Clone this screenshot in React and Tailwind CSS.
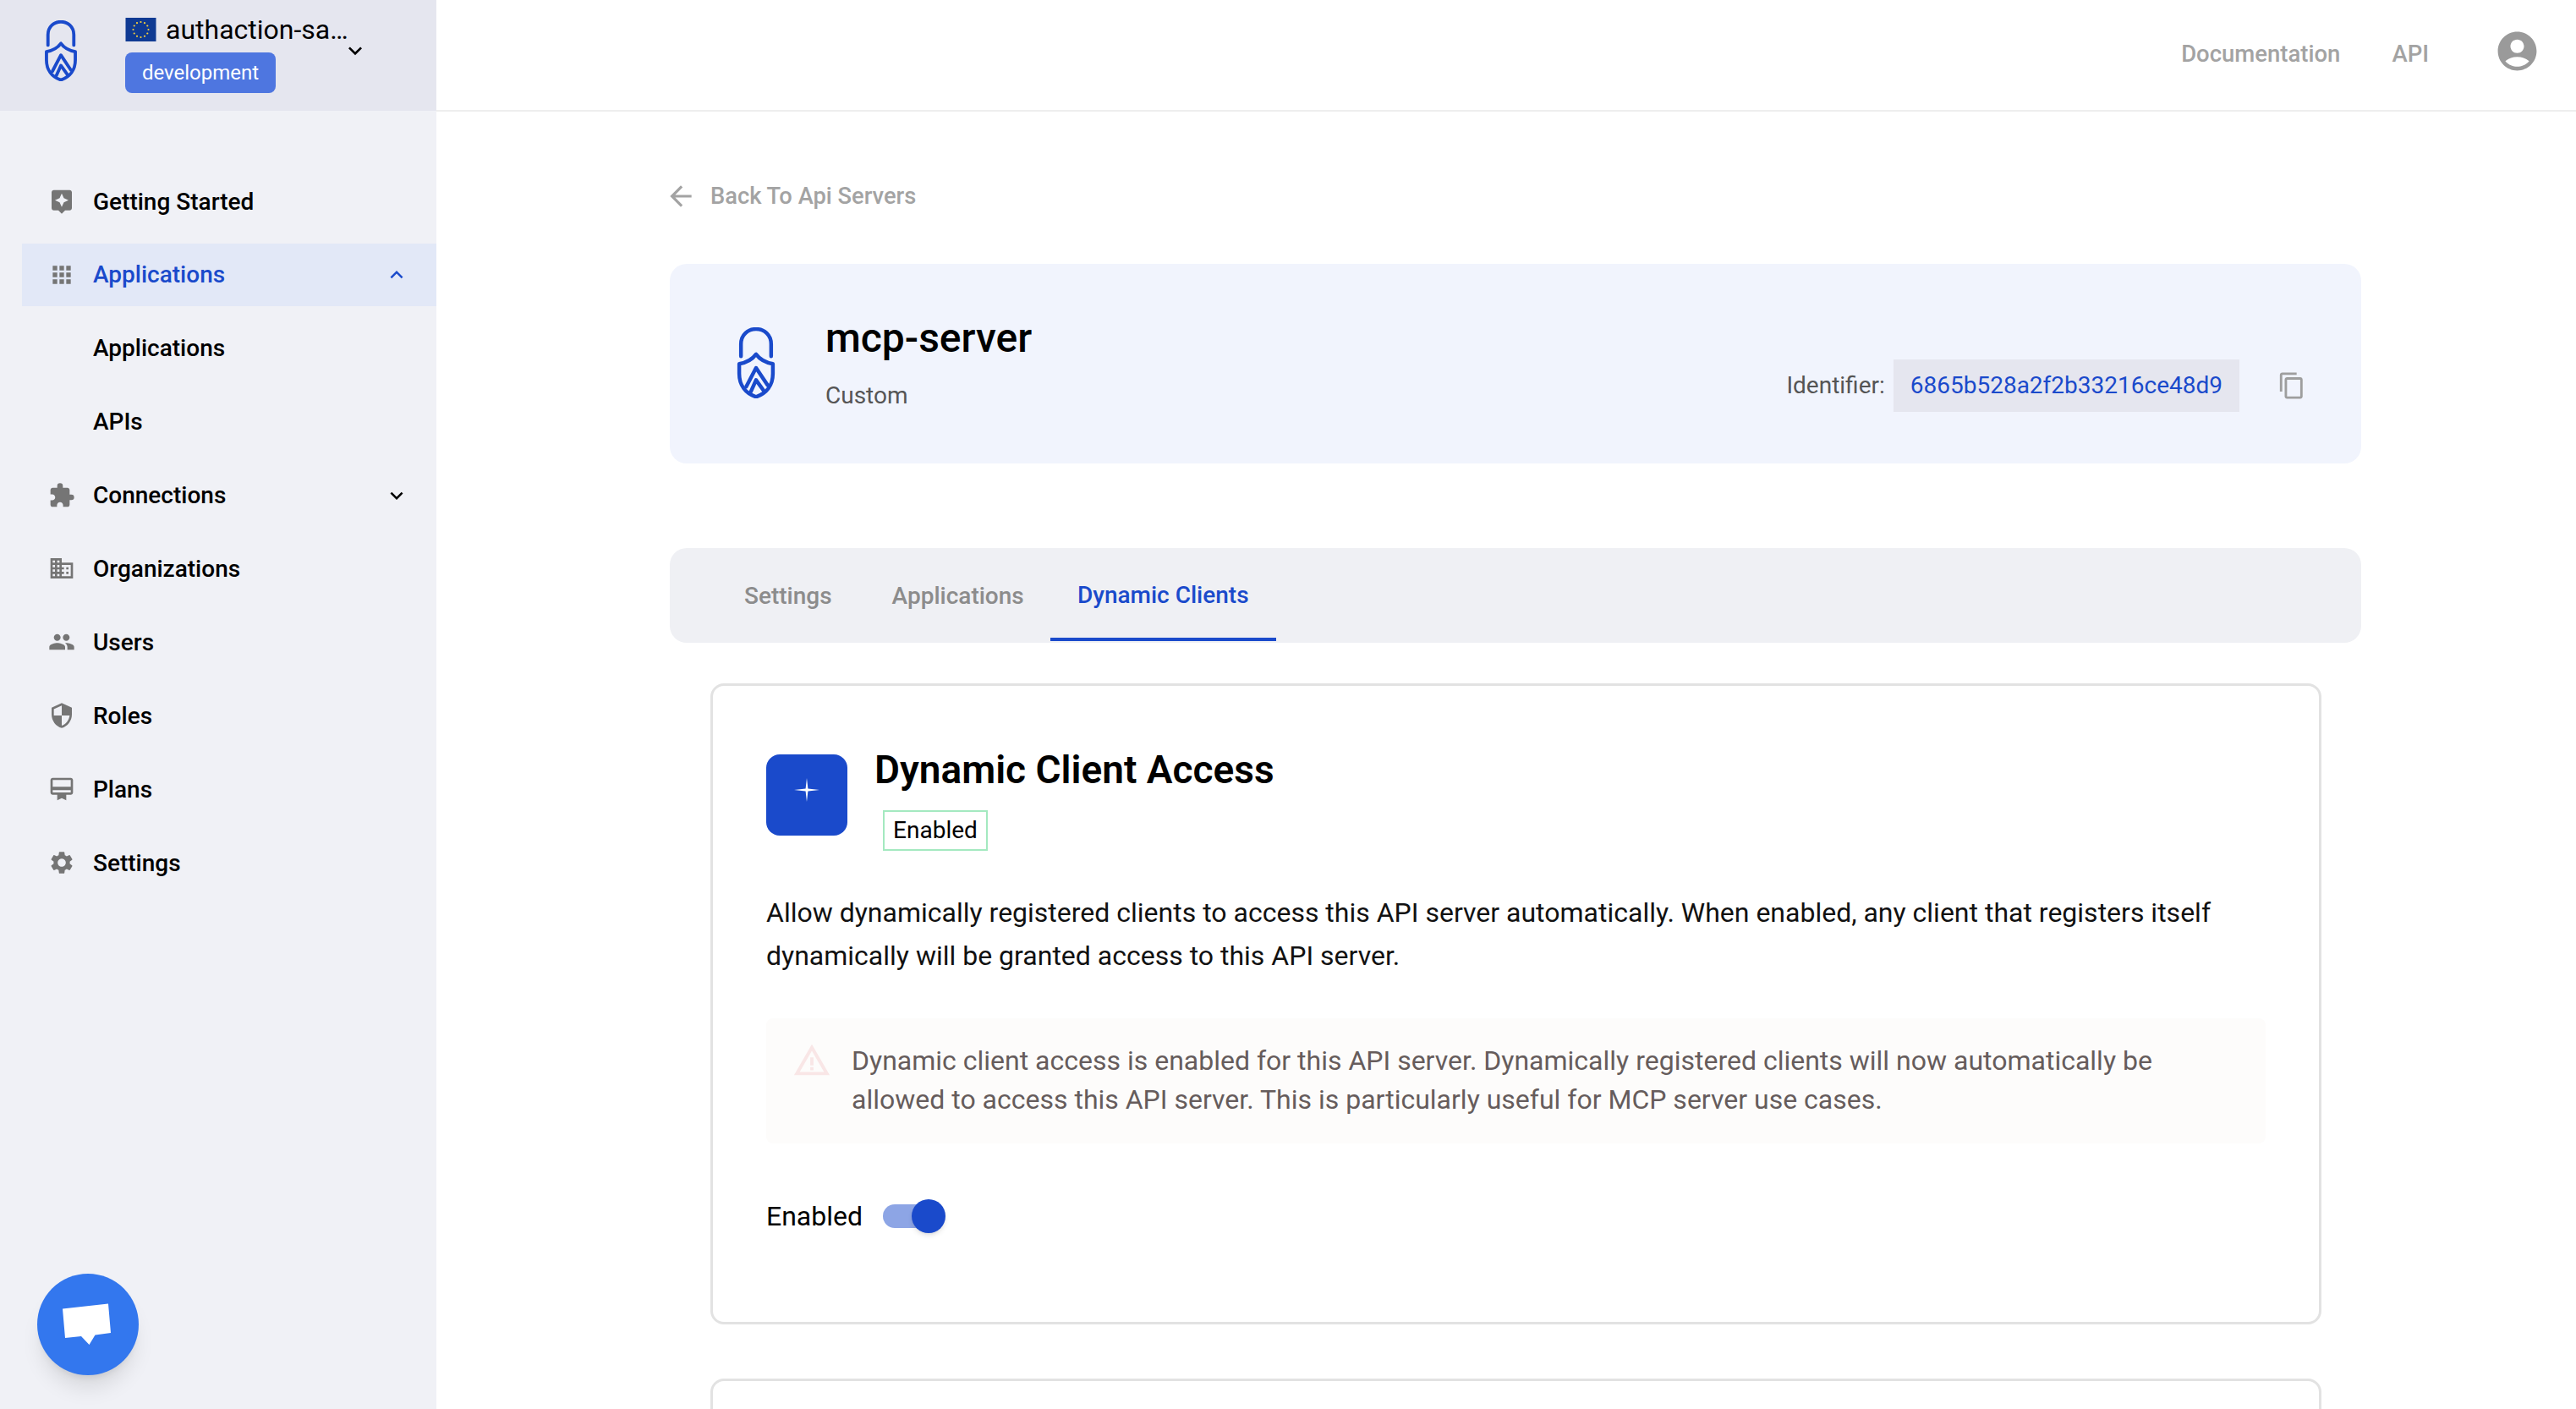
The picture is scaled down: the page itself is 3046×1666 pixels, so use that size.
import {
  MdAssistant,
  MdApps,
  MdExtension,
  MdBusiness,
  MdPeople,
  MdSecurity,
  MdCardMembership,
  MdSettings,
  MdKeyboardArrowDown,
  MdKeyboardArrowUp,
  MdContentCopy,
  MdAccountCircle,
  MdWarningAmber,
  MdArrowBack,
} from "react-icons/md";

function Logo({ className }) {
  return (
    <svg viewBox="0 0 128 245" className={className} fill="none" stroke="#1a4acb" strokeWidth="13" strokeLinecap="round" strokeLinejoin="round">
      <path d="M12 100V58C12 26 36 6 64 6s52 20 52 52v42" />
      <path d="M64 93C50 112 30 122 6 126V160C6 200 28 228 64 240C100 228 122 200 122 160V126C98 122 78 112 64 93Z" />
      <path d="M30 205L64 140L104 200" />
      <path d="M46 222L64 182L90 218" />
    </svg>
  );
}

function Flag() {
  const stars = [];
  for (let i = 0; i < 12; i++) {
    const a = (i * Math.PI) / 6;
    stars.push(<circle key={i} cx={18 + 9 * Math.cos(a)} cy={14 + 9 * Math.sin(a)} r="1.1" fill="#f5cf3a" />);
  }
  return (
    <svg viewBox="0 0 36 28" className="w-[37px] h-[28px] shrink-0">
      <rect width="36" height="28" fill="#0f3a93" />
      {stars}
    </svg>
  );
}

function NavRow({ icon: Icon, label, active, chevron, sub }) {
  return (
    <div className={`flex items-center h-[74px] mb-[12.9px] ml-[26px] pl-[31px] text-[28px] font-medium ${active ? "bg-[#e2e8f7] text-[#1a4acb]" : "text-black"}`}>
      <div className="w-[32px] h-[32px] mr-[21px] flex items-center justify-center text-[#757575]">
        {!sub && <Icon size={32} />}
      </div>
      <span className="pt-[1px]">{label}</span>
      {chevron === "up" && <MdKeyboardArrowUp size={30} className="ml-auto mr-[32px] text-[#1a4acb]" />}
      {chevron === "down" && <MdKeyboardArrowDown size={30} className="ml-auto mr-[32px] text-black" />}
    </div>
  );
}

export default function App() {
  return (
    <div className="relative flex w-full h-screen overflow-hidden bg-white font-['Roboto',sans-serif]">
      <aside className="w-[516px] shrink-0 h-full bg-[#f0f1f6] flex flex-col">
        <div className="h-[131px] bg-[#e5e6ef] flex pl-[52px]">
          <Logo className="w-[40px] h-[72px] mt-[24px] shrink-0" />
          <div className="ml-[56px] pt-[20px] w-[300px]">
            <div className="flex items-center gap-[11px] h-[30px]">
              <Flag />
              <span className="text-[32px] leading-[30px] text-black">authaction-sa…</span>
            </div>
            <div className="flex items-start">
              <div className="mt-[12px] w-[178px] h-[48px] shrink-0 rounded-[8px] bg-[#4e76e0] text-white text-[24px] flex items-center justify-center">
                development
              </div>
              <MdKeyboardArrowDown size={32} className="ml-[78px] -mt-[6px] text-black shrink-0" />
            </div>
          </div>
        </div>
        <nav className="pt-[70px]">
          <NavRow icon={MdAssistant} label="Getting Started" />
          <NavRow icon={MdApps} label="Applications" active chevron="up" />
          <NavRow sub label="Applications" />
          <NavRow sub label="APIs" />
          <NavRow icon={MdExtension} label="Connections" chevron="down" />
          <NavRow icon={MdBusiness} label="Organizations" />
          <NavRow icon={MdPeople} label="Users" />
          <NavRow icon={MdSecurity} label="Roles" />
          <NavRow icon={MdCardMembership} label="Plans" />
          <NavRow icon={MdSettings} label="Settings" />
        </nav>
      </aside>

      <main className="flex-1 min-w-0 flex flex-col">
        <header className="h-[132px] shrink-0 border-b-2 border-[#eeeeee] flex items-center justify-end pr-[42px] text-[27.5px] font-medium text-[#a3a3a3]">
          <span className="mr-[61px] -mt-[2px]">Documentation</span>
          <span className="mr-[77px] -mt-[2px]">API</span>
          <MdAccountCircle size={55} className="text-[#9a9a9a] -mt-[10px]" />
        </header>

        <div className="ml-[276px] w-[2000px]">
          <div className="flex items-center h-[40px] mt-[80px] text-[27.3px] font-medium text-[#a3a3a3]">
            <MdArrowBack size={38} className="mr-[16px] -ml-[6px]" />
            <span>Back To Api Servers</span>
          </div>

          <div className="mt-[60px] h-[236px] rounded-[20px] bg-[#f1f4fd] flex items-center pl-[79px] pr-[65px]">
            <Logo className="w-[46px] h-[84px] shrink-0 -mt-[2px]" />
            <div className="ml-[59px]">
              <div className="text-[48px] leading-[56px] font-medium text-black -mt-[4px]">mcp-server</div>
              <div className="mt-[23px] text-[28px] leading-[34px] text-[#555555]">Custom</div>
            </div>
            <div className="ml-auto flex items-center mt-[52px]">
              <span className="text-[28px] text-[#555555]">Identifier:</span>
              <div className="ml-[10px] h-[62px] bg-[#e5e6ef] px-[20px] flex items-center text-[28px] text-[#1a4acb]">6865b528a2f2b33216ce48d9</div>
              <MdContentCopy size={34} className="ml-[45px] text-[#9e9e9e]" />
            </div>
          </div>

          <div className="mt-[100px] h-[112px] rounded-[20px] bg-[#eff0f4] flex pl-[88px] text-[28px] font-medium text-[#8c8c8c]">
            <div className="flex items-center pt-[2px]">Settings</div>
            <div className="flex items-center pt-[2px] ml-[71px]">Applications</div>
            <div className="ml-[31px] w-[267px] h-[110px] pt-[6px] flex items-center justify-center border-b-4 border-[#1a4acb] text-[#1a4acb]">Dynamic Clients</div>
          </div>

          <div className="mt-[48px] ml-[48px] w-[1905px] h-[758px] rounded-[16px] border-[3px] border-[#e2e2e2] pt-[81px] pl-[63px] pr-[63px]">
            <div className="flex">
              <div className="w-[96px] h-[96px] rounded-[16px] bg-[#1a4acb] flex justify-center pt-[28px] shrink-0">
                <svg viewBox="0 0 30 28" className="w-[30px] h-[28px]">
                  <path d="M15 0L16.4 12.6L30 14L16.4 15.4L15 28L13.6 15.4L0 14L13.6 12.6Z" fill="white" />
                </svg>
              </div>
              <div className="ml-[32px]">
                <div className="text-[46px] leading-[40px] font-semibold text-black -mt-[2px]">Dynamic Client Access</div>
                <div className="mt-[28px] ml-[10px] w-[124px] h-[48px] border-2 border-[#a4e9c0] text-[28px] text-black flex items-center justify-center">Enabled</div>
              </div>
            </div>
            <p className="mt-[48px] text-[32px] leading-[51px] text-[#111111]">
              Allow dynamically registered clients to access this API server automatically. When enabled, any client that registers itself dynamically will be granted access to this API server.
            </p>
            <div className="mt-[48px] h-[148px] rounded-[8px] bg-[#fdfcfb] flex pl-[34px] pr-[60px] pt-[27px]">
              <MdWarningAmber size={46} className="text-[#f9e6e6] -ml-[3px] shrink-0" />
              <p className="ml-[24px] text-[32px] leading-[46px] text-[#665c5c]">
                Dynamic client access is enabled for this API server. Dynamically registered clients will now automatically be allowed to access this API server. This is particularly useful for MCP server use cases.
              </p>
            </div>
            <div className="mt-[66px] flex items-center h-[40px] text-[32px] text-black">
              <span>Enabled</span>
              <div className="relative ml-[24px] w-[62px] h-[28px] rounded-full bg-[#8da5e5]">
                <div className="absolute -top-[6px] left-[34px] w-[40px] h-[40px] rounded-full bg-[#1a4acb] shadow-md" />
              </div>
            </div>
          </div>

          <div className="mt-[64px] ml-[48px] w-[1905px] h-[300px] rounded-[16px] border-[3px] border-[#e2e2e2]" />
        </div>
      </main>

      <div className="absolute left-[44px] bottom-[40px] w-[120px] h-[120px] rounded-full bg-[#3377ee] shadow-xl flex items-center justify-center">
        <svg viewBox="0 0 60 52" className="w-[60px] h-[52px] mt-[2px]">
          <path d="M0 6.5L54 0.5L57 35L38.5 37.5L31.5 49L22 39L3 41Z" fill="white" />
        </svg>
      </div>
    </div>
  );
}
